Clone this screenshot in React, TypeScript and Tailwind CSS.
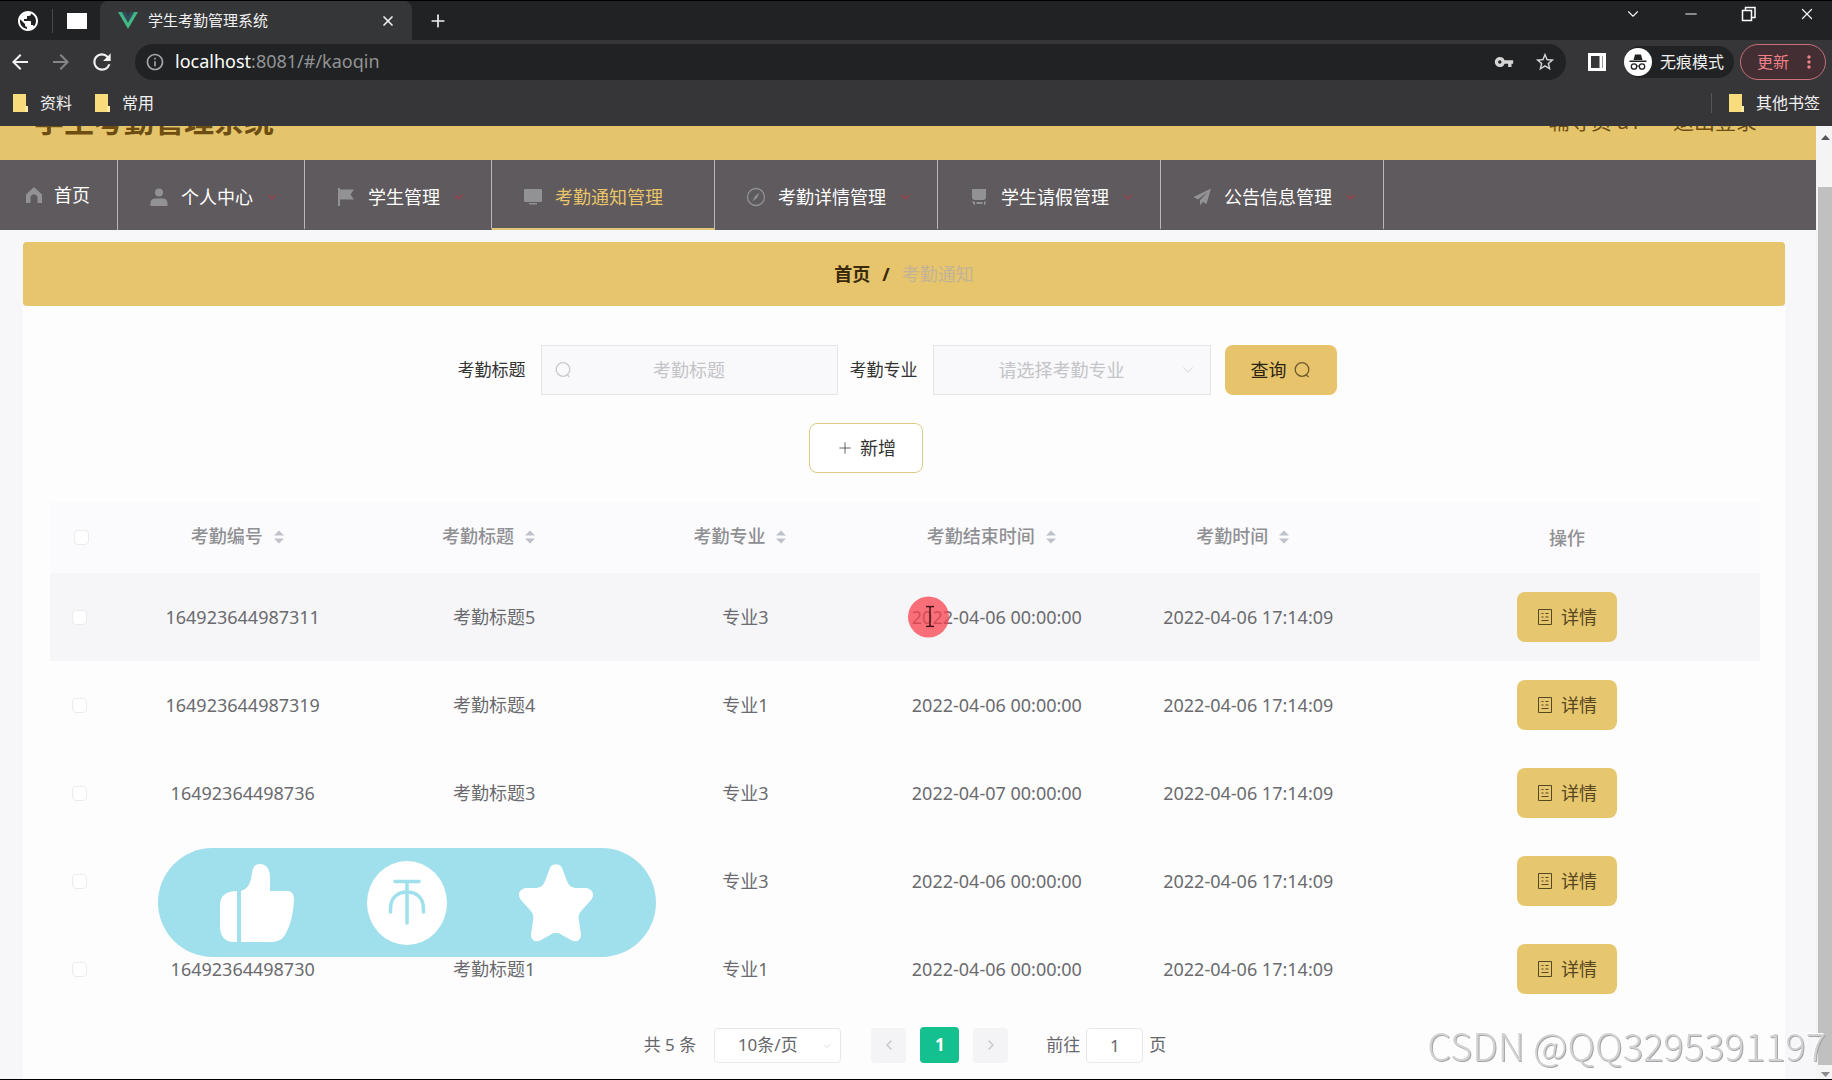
import { MdArrowBack, MdArrowForward, MdRefresh, MdInfoOutline, MdVpnKey, MdStarBorder, MdPublic, MdMoreVert } from 'react-icons/md';
import { ChevronDown, ChevronLeft, ChevronRight, Minus, Plus, X } from 'lucide-react';

const records = [
    { id: '164923644987311', title: '考勤标题5', major: '专业3', end: '2022-04-06 00:00:00', time: '2022-04-06 17:14:09' },
    { id: '164923644987319', title: '考勤标题4', major: '专业1', end: '2022-04-06 00:00:00', time: '2022-04-06 17:14:09' },
    { id: '16492364498736', title: '考勤标题3', major: '专业3', end: '2022-04-07 00:00:00', time: '2022-04-06 17:14:09' },
    { id: '16492364498733', title: '考勤标题2', major: '专业3', end: '2022-04-06 00:00:00', time: '2022-04-06 17:14:09' },
    { id: '16492364498730', title: '考勤标题1', major: '专业1', end: '2022-04-06 00:00:00', time: '2022-04-06 17:14:09' },
];

const columns = ['考勤编号', '考勤标题', '考勤专业', '考勤结束时间', '考勤时间'];

const menus = [
    { name: '个人中心', icon: 'user' },
    { name: '学生管理', icon: 'flag' },
    { name: '考勤通知管理', icon: 'board', active: true },
    { name: '考勤详情管理', icon: 'compass' },
    { name: '学生请假管理', icon: 'cup' },
    { name: '公告信息管理', icon: 'send' },
];

const NavIcon = ({ name }: { name: string }) => (
    <svg viewBox="0 0 20 20" className="size-5 shrink-0 fill-[#929194]" aria-hidden="true">
        {name === 'home' && <path d="M10 2 L18 9.5 V18 H13.5 V13 a3.5 3.5 0 0 0 -7 0 V18 H2 V9.5 Z" />}
        {name === 'user' && (
            <>
                <circle cx="10" cy="5.5" r="4" />
                <path d="M1.5 19 V16 a4.5 4.5 0 0 1 4.5 -4.5 h8 a4.5 4.5 0 0 1 4.5 4.5 V19 Z" />
            </>
        )}
        {name === 'flag' && <path d="M2 1 H4 V2.5 H18 L14.5 7.5 L18 12.5 H4 V19 H2 Z" />}
        {name === 'board' && <path d="M2 2 h16 a1 1 0 0 1 1 1 v11 a1 1 0 0 1 -1 1 H2 a1 1 0 0 1 -1 -1 V3 a1 1 0 0 1 1 -1 Z M6 16 h8 v1.5 H6 Z" />}
        {name === 'compass' && (
            <>
                <circle cx="10" cy="10" r="8.5" fill="none" stroke="#929194" strokeWidth="1.3" />
                <path d="M13.5 5.5 L11 11 L6.5 14.5 L9 9 Z" />
            </>
        )}
        {name === 'cup' && <path d="M3 2 h14 v8 a3 3 0 0 1 -3 3 H6 a3 3 0 0 1 -3 -3 Z M3 14.5 h3 V18 H5 Z M7.5 15 h6 v2 h-6 Z M15 14.5 h2 L16 18 h-1 Z" />}
        {name === 'send' && <path d="M19 1.5 L1.5 10 L6 12.5 L15.5 5 L8 13.3 V18.5 L10.8 15 L14.5 17 Z" />}
    </svg>
);

const SearchCircle = ({ className }: { className: string }) => (
    <svg viewBox="0 0 18 18" className={className} fill="none" stroke="currentColor" strokeWidth="1.3" aria-hidden="true">
        <circle cx="9" cy="8.5" r="6.8" />
        <path d="M12.8 13.4 L15.5 16" />
    </svg>
);

const SortCaret = () => (
    <svg viewBox="0 0 12 16" className="mx-2.5 h-4 w-3 fill-[#bfc2c9]" aria-hidden="true">
        <path d="M6 1.5 L11 6.5 H1 Z M6 14.5 L11 9.5 H1 Z" />
    </svg>
);

const DocIcon = () => (
    <svg viewBox="0 0 16 18" className="h-[18px] w-4" fill="none" stroke="currentColor" strokeWidth="1" aria-hidden="true">
        <path d="M1.5 1.5 h13 v15 h-13 Z M4.5 5.5 h2 M8.5 5.5 h3 M4.5 9 h2 M8.5 9 h3 M4.5 12.5 h7" />
    </svg>
);

const Folder = () => (
    <svg viewBox="0 0 16 18" className="h-[18px] w-4" aria-hidden="true">
        <path d="M1 0 h13 v12 l2 1 v5 H1 Z" fill="#f8dc7c" />
        <path d="M13 12 h3 v6 h-3 Z" fill="#fbe9a5" />
    </svg>
);

const BrowserChrome = () => (
    <div className="border-t border-black bg-[#363639] text-[#f1f1f1]">
        <div className="flex h-[39px] bg-[#202223]">
            <div className="flex w-[100px] items-center">
                <MdPublic className="ml-4 size-6 text-white" />
                <div className="ml-3 h-6 w-px bg-[#48494b]" />
                <div className="ml-3.5 h-4 w-5 bg-white" />
            </div>
            <div className="flex w-[312px] items-center rounded-t-lg bg-[#353638] px-4">
                <svg viewBox="0 0 20 17" className="ml-0.5 h-[17px] w-5" aria-hidden="true">
                    <path d="M0 0 H4 L10 10.5 L16 0 H20 L10 17 Z" fill="#41b883" />
                    <path d="M4 0 H7.7 L10 4 L12.3 0 H16 L10 10.5 Z" fill="#35495e" />
                </svg>
                <span className="ml-2.5 text-[15px]">学生考勤管理系统</span>
                <button aria-label="关闭标签" className="ml-auto"><X className="size-4" strokeWidth={2.5} /></button>
            </div>
            <button aria-label="新标签" className="ml-4"><Plus className="size-5" /></button>
            <div className="ml-auto flex items-start gap-10 pt-1 pr-4">
                <ChevronDown className="size-[18px]" strokeWidth={1.5} />
                <Minus className="size-[18px]" strokeWidth={1.5} />
                <svg viewBox="0 0 18 18" className="size-[18px]" fill="none" stroke="white" strokeWidth="1.5" aria-hidden="true">
                    <path d="M2.5 5.5 h9 v10 h-9 Z M5.5 5.5 V2.5 h9.5 v10 h-3.5" />
                </svg>
                <X className="size-[18px]" strokeWidth={1.75} />
            </div>
        </div>
        <div className="flex h-[43px] items-center">
            <MdArrowBack className="ml-2 size-6" />
            <MdArrowForward className="ml-[17px] size-6 text-[#858687]" />
            <MdRefresh className="ml-4 size-[26px]" />
            <div className="ml-5 flex h-9 flex-1 items-center rounded-full bg-[#202223] px-2.5">
                <MdInfoOutline className="size-5 text-[#a5a6a8]" />
                <span className="ml-2.5 text-[18px] text-[#929395]"><span className="text-white">localhost</span>:8081/#/kaoqin</span>
                <MdVpnKey className="ml-auto size-5 text-[#d5d5d5]" />
                <MdStarBorder className="ml-5 size-[22px] text-[#d5d5d5]" />
            </div>
            <svg viewBox="0 0 18 18" className="ml-[22px] size-[18px]" fill="none" stroke="white" strokeWidth="3" aria-hidden="true">
                <path d="M1.5 1.5 h15 v15 h-15 Z M13 1.5 V16.5" />
            </svg>
            <div className="ml-[18px] flex h-8 items-center rounded-full bg-[#202223] pr-2.5">
                <svg viewBox="0 0 28 28" className="size-7" aria-hidden="true">
                    <circle cx="14" cy="14" r="14" fill="white" />
                    <path d="M9.5 12 L11 6.5 h6 L18.5 12 Z M5.5 12.5 h17 v1.5 h-17 Z" fill="#202223" />
                    <path d="M12.5 18 h3" stroke="#202223" />
                    <circle cx="10" cy="18.5" r="2.7" fill="none" stroke="#202223" strokeWidth="1.3" />
                    <circle cx="18" cy="18.5" r="2.7" fill="none" stroke="#202223" strokeWidth="1.3" />
                </svg>
                <span className="ml-2 text-[16px]">无痕模式</span>
            </div>
            <button className="mx-1.5 flex h-9 items-center rounded-full border border-[#c8707c] bg-[#422e33] pr-1.5 pl-4 text-[16px] text-[#f08088]">
                更新
                <MdMoreVert className="ml-2.5 size-5" />
            </button>
        </div>
        <div className="flex h-[43px] items-center pb-1 text-[16px] leading-none">
            <a href="#ziliao" className="ml-3 flex items-center gap-3"><Folder />资料</a>
            <a href="#changyong" className="ml-[22px] flex items-center gap-3"><Folder />常用</a>
            <div className="ml-auto h-5 w-px bg-[#55565a]" />
            <a href="#other" className="mr-3 ml-4 flex items-center gap-3"><Folder />其他书签</a>
        </div>
    </div>
);

const SiteHeader = () => (
    <header>
        <div className="h-[34px] overflow-hidden bg-[#e5c56b]">
            <div className="-mt-11 flex h-[78px] items-center pr-[59px] pl-[34px] leading-none text-[#6e4d12]">
                <h1 className="text-[30px] font-bold">学生考勤管理系统</h1>
                <span className="ml-auto text-[21px]">辅导员 a1</span>
                <a href="#logout" className="ml-8 text-[21px]">退出登录</a>
            </div>
        </div>
        <nav className="flex h-[70px] bg-[#5e5a5d] text-[18px] text-white">
            <a href="#home" className="flex items-center border-r border-[#b9b7b9] pr-[27px] pl-6">
                <NavIcon name="home" />
                <span className="ml-2.5">首页</span>
            </a>
            {menus.map((menu) => (
                <a
                    key={menu.name}
                    href={'#' + menu.icon}
                    className={`flex items-center border-r border-r-[#b9b7b9] border-b-2 pt-1.5 pr-[25px] pl-[31px] ${menu.active ? 'border-b-[#e0c878] text-[#e9c46a]' : 'border-b-transparent'}`}
                >
                    <NavIcon name={menu.icon} />
                    <span className="ml-3">{menu.name}</span>
                    <ChevronDown className={`ml-3 size-[14px] ${menu.active ? 'text-transparent' : 'text-[#964450]'}`} strokeWidth={3} />
                </a>
            ))}
        </nav>
    </header>
);

const SearchForm = () => (
    <form className="pt-[39px]">
        <div className="flex items-center justify-center text-[17px] text-[#333]">
            <label htmlFor="title" className="mr-[15px]">考勤标题</label>
            <div className="mr-3 flex h-[50px] w-[297px] items-center border border-[#e6e6e8] bg-[#f9f8fa] px-3">
                <SearchCircle className="size-[18px] text-[#c9cacd]" />
                <input id="title" placeholder="考勤标题" className="min-w-0 flex-1 bg-transparent pr-[18px] text-center text-[18px] outline-none placeholder:text-[#c3c4c8]" />
            </div>
            <label htmlFor="major" className="mr-[15px]">考勤专业</label>
            <div className="relative mr-[14px]">
                <select id="major" className="h-[50px] w-[278px] appearance-none border border-[#e6e6e8] bg-[#f9f8fa] pr-8 pl-3 text-[18px] text-[#c3c4c8] [text-align-last:center]">
                    <option>请选择考勤专业</option>
                </select>
                <ChevronDown className="pointer-events-none absolute top-4 right-[14px] size-[18px] text-[#cfd0d4]" strokeWidth={1.25} />
            </div>
            <button type="button" className="mr-4 flex h-[50px] w-[112px] items-center justify-center gap-1.5 rounded-lg bg-[#e7c46c] text-[18px] text-[#2b2413]">
                查询
                <SearchCircle className="size-[18px] text-[#6d5a2b]" />
            </button>
        </div>
        <div className="flex justify-center pt-7 pr-[78px]">
            <button type="button" className="flex h-[50px] w-[114px] items-center justify-center gap-1.5 rounded-lg border border-[#dccb83] bg-white text-[18px] text-[#333]">
                <Plus className="size-[18px]" strokeWidth={1} />
                新增
            </button>
        </div>
    </form>
);

const RecordTable = () => (
    <table className="mt-[29px] w-full table-fixed text-center text-[18px] text-[#6a6b6f]">
        <colgroup>
            <col className="w-[67px]" />
            {columns.map((column) => <col key={column} />)}
            <col className="w-[386px]" />
        </colgroup>
        <thead className="bg-[#fbfafc] text-[#8f9094]">
            <tr className="h-[71px]">
                <th className="pl-[24px]">
                    <input type="checkbox" aria-label="全选" className="block size-[15px] appearance-none rounded-sm border border-[#ebebee] bg-white" />
                </th>
                {columns.map((column) => (
                    <th key={column} className="pb-0.5 font-medium">
                        <div className="flex items-center justify-center">
                            <span>{column}</span>
                            <SortCaret />
                        </div>
                    </th>
                ))}
                <th className="pt-0.5 font-medium">操作</th>
            </tr>
        </thead>
        <tbody>
            {records.map((record, index) => (
                <tr key={record.id} className={`h-[88px] ${index === 0 ? 'bg-[#f6f6f8]' : ''}`}>
                    <td className="pl-[22px]">
                        <input type="checkbox" aria-label={record.title} className="block size-[15px] appearance-none rounded-sm border border-[#ebebee] bg-white" />
                    </td>
                    <td>{record.id}</td>
                    <td>{record.title}</td>
                    <td>{record.major}</td>
                    <td>
                        <span className="relative">
                            {record.end}
                            {index === 0 && (
                                <span className="absolute top-1/2 -left-1 flex size-[41px] -translate-y-1/2 items-center justify-center rounded-full bg-[#f9424f]/75">
                                    <svg viewBox="0 0 10 22" className="ml-1 h-[22px] w-2.5" fill="none" stroke="#3b1015" strokeWidth="1.4" aria-hidden="true">
                                        <path d="M1 1 H4 L5 2 L6 1 H9 M5 2 V20 M1 21 H4 L5 20 L6 21 H9" />
                                    </svg>
                                </span>
                            )}
                        </span>
                    </td>
                    <td>{record.time}</td>
                    <td>
                        <button className="mx-auto flex h-[50px] w-[100px] items-center justify-center gap-2 rounded-lg bg-[#e6c66e] text-[#55471f]">
                            <DocIcon />
                            详情
                        </button>
                    </td>
                </tr>
            ))}
        </tbody>
    </table>
);

const Pagination = () => (
    <div className="flex items-center justify-center pt-[14px] text-[17px] text-[#66676b]">
        <span>共 5 条</span>
        <div className="relative ml-[18px]">
            <select aria-label="每页条数" className="h-[35px] w-[127px] appearance-none rounded-sm border border-[#e8e8eb] bg-white pr-5 [text-align-last:center]">
                <option>10条/页</option>
            </select>
            <ChevronDown className="pointer-events-none absolute top-3 right-2 size-3 text-[#dcdde0]" />
        </div>
        <button aria-label="上一页" className="ml-[30px] flex h-[35px] w-[35px] items-center justify-center rounded-sm bg-[#f4f4f6]">
            <ChevronLeft className="size-4 text-[#c4c5ca]" />
        </button>
        <button className="mx-[14px] h-[36px] w-[39px] rounded-sm bg-[#14c08d] font-bold text-white">1</button>
        <button aria-label="下一页" className="flex h-[35px] w-[35px] items-center justify-center rounded-sm bg-[#f4f4f6]">
            <ChevronRight className="size-4 text-[#c4c5ca]" />
        </button>
        <label htmlFor="page" className="ml-[38px]">前往</label>
        <input id="page" defaultValue="1" className="mx-1.5 h-[35px] w-[57px] rounded-sm border border-[#e8e8eb] bg-white text-center" />
        <span>页</span>
    </div>
);

const LikeBar = () => (
    <div className="fixed bottom-[123px] left-[158px] flex h-[109px] w-[498px] items-center justify-between rounded-full bg-[#9fe0ec] pr-[63px] pl-[62px]">
        <svg viewBox="0 0 74 78" className="h-[78px] w-[74px]" fill="white" aria-hidden="true">
            <path d="M17 27 V78 H14 C5 78 0 72 0 63 V41 C0 32 6 27 17 27 Z" />
            <path d="M21 27 C28 25 31 19 32 9 C33 3 35 0 40 0 C46 0 50 5 50 13 V27 H67 C72 27 74 30 74 36 C73 50 71 59 67 67 C64 74 60 78 51 78 H21 Z" />
        </svg>
        <svg viewBox="0 0 80 84" className="h-[84px] w-20" fill="none" stroke="#9fe0ec" strokeWidth="3.5" strokeLinecap="round" aria-hidden="true">
            <ellipse cx="40" cy="42" rx="40" ry="42" fill="white" stroke="none" />
            <path d="M28 20.5 H52 M40 21 V62 M23.5 51 V48 C23.5 37 30 31 40 31 C50 31 56.5 37 56.5 48 V51" />
        </svg>
        <svg viewBox="0 0 74 78" className="h-[78px] w-[74px]" fill="white" aria-hidden="true">
            <path d="M31 4 C33 -1 41 -1 43 4 L48 17 C50 22 53 24 58 24 L67 24 C74 25 76 31 72 36 L63 46 C60 49 59 52 60 57 L62 70 C62 77 57 79 52 76 L43 71 C39 68 35 68 31 71 L22 76 C17 79 12 77 12 70 L14 57 C15 52 14 49 11 46 L2 36 C-2 31 0 25 7 24 L16 24 C21 24 24 22 26 17 Z" />
        </svg>
    </div>
);

const Scrollbar = () => (
    <div className="flex w-4 shrink-0 flex-col items-end bg-[#f4f4f5]">
        <svg viewBox="0 0 14 24" className="h-6 w-3.5 fill-[#55565a]" aria-hidden="true"><path d="M3 14 L7.5 9 L12 14 Z" /></svg>
        <div className="mt-[37px] w-3.5 flex-1 bg-[#c1c0c1]" />
        <svg viewBox="0 0 14 14" className="size-3.5 fill-[#8a8b8e]" aria-hidden="true"><path d="M3 7 L7.5 12 L12 7 Z" /></svg>
    </div>
);

const App = () => {
    return (
        <div className='flex min-h-screen flex-col border-b border-black bg-[#f7f6f8] font-["Noto_Sans","Noto_Sans_CJK_SC",sans-serif]'>
            <BrowserChrome />
            <div className="flex flex-1">
                <div className="flex min-w-0 flex-1 flex-col">
                    <SiteHeader />
                    <main className="flex flex-1 flex-col pt-3 pr-[31px] pl-[23px]">
                        <div className="flex h-16 items-center justify-center gap-3 rounded-sm bg-[#e7c56d] text-[18px] font-bold text-[#3a2a0c]">
                            <a href="#home">首页</a>
                            <span>/</span>
                            <span className="font-normal text-[#c3b396]">考勤通知</span>
                        </div>
                        <section className="flex-1 bg-[#fefdfe] pr-[25px] pl-[27px]">
                            <SearchForm />
                            <RecordTable />
                            <Pagination />
                        </section>
                    </main>
                </div>
                <Scrollbar />
            </div>
            <LikeBar />
            <div className='fixed right-1.5 bottom-2.5 font-["Noto_Sans_CJK_SC",sans-serif] text-[38px] leading-[50px] font-light text-[#d2d2d4] [text-shadow:1px_1px_0_#a5a5a8,-1px_-1px_0_#fff]'>
                CSDN @QQ3295391197
            </div>
        </div>
    );
};

export default App;
